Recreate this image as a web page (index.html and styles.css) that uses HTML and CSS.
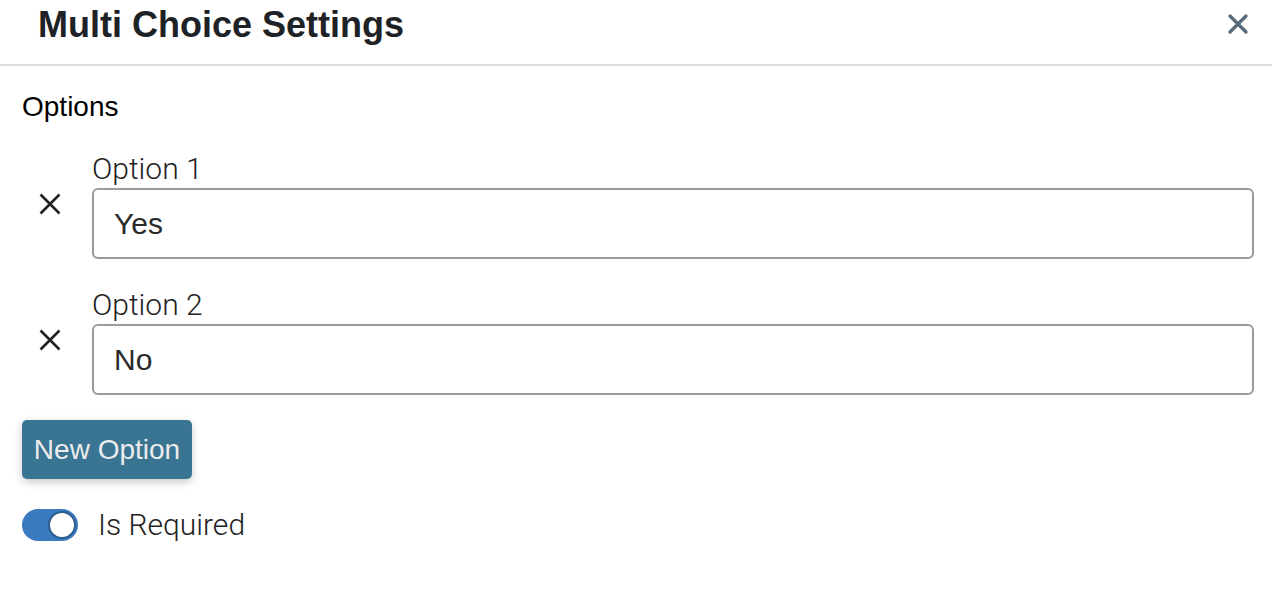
FILE: index.html
```html
<!DOCTYPE html>
<html lang="en">
<head>
<meta charset="utf-8">
<title>Multi Choice Settings</title>
<link rel="stylesheet" href="styles.css">
</head>
<body>
<div class="modal">
  <header class="hdr">
    <h1 class="title">Multi Choice Settings</h1>
    <button class="close" aria-label="Close">
      <svg width="22" height="22" viewBox="0 0 22 22"><path d="M3 3 L19 19 M19 3 L3 19" stroke="#5b6b79" stroke-width="3.4" stroke-linecap="round"/></svg>
    </button>
  </header>
  <div class="content">
    <div class="section-title">Options</div>
    <div class="opt-row">
      <button class="remove" aria-label="Remove option 1">
        <svg width="24" height="22" viewBox="0 0 24 22"><path d="M2.5 1.5 L21.5 20.5 M21.5 1.5 L2.5 20.5" stroke="#222" stroke-width="2.6"/></svg>
      </button>
      <div class="field">
        <label class="field-label">Option 1</label>
        <input class="field-input" type="text" value="Yes">
      </div>
    </div>
    <div class="opt-row">
      <button class="remove" aria-label="Remove option 2">
        <svg width="24" height="22" viewBox="0 0 24 22"><path d="M2.5 1.5 L21.5 20.5 M21.5 1.5 L2.5 20.5" stroke="#222" stroke-width="2.6"/></svg>
      </button>
      <div class="field">
        <label class="field-label">Option 2</label>
        <input class="field-input" type="text" value="No">
      </div>
    </div>
    <button class="btn">New Option</button>
    <label class="toggle-row">
      <span class="switch"><span class="knob"></span></span>
      <span class="toggle-text">Is Required</span>
    </label>
  </div>
</div>
</body>
</html>
```
FILE: styles.css
```css
* { box-sizing: border-box; }
html, body { margin: 0; padding: 0; background: #fff; }
body { font-family: "Liberation Sans", Arial, sans-serif; color: #000; }

.hdr {
  height: 66px;
  border-bottom: 2px solid #dcdcdc;
  display: flex;
  align-items: flex-start;
  justify-content: space-between;
  padding: 5px 23px 0 38px;
}
.title {
  margin: 0;
  font-size: 36px;
  line-height: 40px;
  font-weight: 700;
  color: #1e2226;
}
.close {
  border: 0;
  background: none;
  padding: 0;
  margin-top: 8px;
  width: 22px;
  height: 22px;
  display: flex;
  align-items: center;
  justify-content: center;
}

.content {
  padding: 25px 18px 0 22px;
  display: flex;
  flex-direction: column;
  align-items: flex-start;
}
.section-title {
  font-size: 28px;
  line-height: 32px;
  margin-bottom: 29px;
}
.opt-row {
  display: flex;
  align-items: flex-start;
  width: 100%;
  margin-bottom: 29px;
}
.opt-row + .opt-row { margin-bottom: 25px; }
.remove {
  flex: 0 0 70px;
  border: 0;
  background: none;
  padding: 41px 0 0 16px;
  text-align: left;
}
.remove svg { display: block; }
.field {
  flex: 1;
  display: flex;
  flex-direction: column;
}
.field-label {
  font-family: Roboto, "Liberation Sans", sans-serif;
  font-weight: 300;
  font-size: 30px;
  line-height: 34px;
  color: #222;
  margin-bottom: 2px;
}
.field-input {
  height: 71px;
  width: 100%;
  border: 2px solid #9b9b9b;
  border-radius: 6px;
  padding: 0 20px;
  font-family: "Liberation Sans", Arial, sans-serif;
  font-size: 30px;
  color: #2a2a2a;
  outline: none;
}

.btn {
  width: 170px;
  height: 59px;
  border: 0;
  border-radius: 5px;
  background: #3a7493;
  color: #ececec;
  font-family: "Liberation Sans", Arial, sans-serif;
  font-size: 28px;
  padding: 0;
  box-shadow: 0 3px 8px rgba(0, 0, 0, 0.22);
  margin-bottom: 29px;
}

.toggle-row {
  display: flex;
  align-items: center;
  gap: 20px;
}
.switch {
  width: 56px;
  height: 32px;
  border-radius: 16px;
  background: #3a7bbf;
  display: flex;
  align-items: center;
  justify-content: flex-end;
  padding-right: 2px;
}
.knob {
  width: 28px;
  height: 28px;
  border-radius: 50%;
  background: #fff;
  border: 2px solid #2c5c8c;
}
.toggle-text {
  font-family: Roboto, "Liberation Sans", sans-serif;
  font-weight: 300;
  font-size: 30px;
  line-height: 34px;
  color: #222;
}
```
